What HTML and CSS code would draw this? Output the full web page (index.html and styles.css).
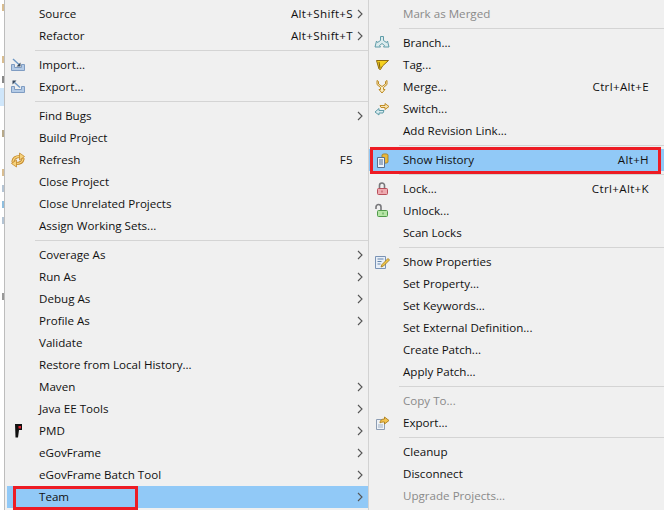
FILE: index.html
```html
<!DOCTYPE html>
<html lang="en">
<head>
<meta charset="utf-8">
<title>Team menu</title>
<link rel="stylesheet" href="styles.css">
</head>
<body>
<svg class="defs" width="0" height="0">
  <defs>
    <symbol id="chev" viewBox="0 0 6 10"><path d="M1 1l4 4-4 4" fill="none" stroke="#555" stroke-width="1.1"/></symbol>
  </defs>
</svg>
<div class="screen">
  <div class="backdrop">
    <span class="frag frag-a"></span>
    <span class="frag frag-b"></span>
    <span class="frag frag-c"></span>
    <span class="frag frag-d"></span>
    <span class="frag frag-e"></span>
    <span class="frag frag-f"></span>
    <span class="frag frag-g"></span>
    <span class="frag frag-h"></span>
    <span class="frag frag-i"></span>
    <span class="frag frag-j"></span>
  </div>
  <div class="menu menu-main">
    <div class="item"><span class="icon"></span><span class="label">Source</span><span class="key">Alt+Shift+S</span><span class="arrow"><svg width="6" height="10"><use href="#chev"/></svg></span></div>
    <div class="item"><span class="icon"></span><span class="label">Refactor</span><span class="key">Alt+Shift+T</span><span class="arrow"><svg width="6" height="10"><use href="#chev"/></svg></span></div>
    <div class="sep"></div>
    <div class="item"><span class="icon"><svg width="16" height="16" viewBox="0 0 16 16"><path d="M1.5 7.5h3v3h7v-3h3v6h-13z" fill="#b4cbe6" stroke="#7f9cc2"/><path d="M3 2l6.5 6" stroke="#6d97c4" stroke-width="1.4"/><path d="M10.5 5.5v4h-4z" fill="#33475f"/></svg></span><span class="label">Import...</span></div>
    <div class="item"><span class="icon"><svg width="16" height="16" viewBox="0 0 16 16"><path d="M1.5 7.5h3v3h7v-3h3v6h-13z" fill="#b4cbe6" stroke="#7f9cc2"/><path d="M10 8.5L4.5 3.5" stroke="#6d97c4" stroke-width="1.4"/><path d="M2.5 1.5h4l-4 4z" fill="#33475f"/></svg></span><span class="label">Export...</span></div>
    <div class="sep"></div>
    <div class="item"><span class="icon"></span><span class="label">Find Bugs</span><span class="arrow"><svg width="6" height="10"><use href="#chev"/></svg></span></div>
    <div class="item"><span class="icon"></span><span class="label">Build Project</span></div>
    <div class="item"><span class="icon"><svg width="16" height="16" viewBox="0 0 16 16"><g fill="none" stroke-linecap="round"><path d="M3 9.500C3.500 6 6.500 4.500 10 4.500" stroke="#c48a2c" stroke-width="3.200"/><path d="M13 7C12.500 10 9.500 11.500 6 11.500" stroke="#c48a2c" stroke-width="3.200"/><path d="M3 9.500C3.500 6 6.500 4.500 10 4.500" stroke="#f6d27c" stroke-width="1.400"/><path d="M13 7C12.500 10 9.500 11.500 6 11.500" stroke="#f6d27c" stroke-width="1.400"/></g><path d="M9.500 1l5 3.500-5 3.500z" fill="#f6d27c" stroke="#c48a2c" stroke-width=".8"/><path d="M6.500 8l-5 3.500 5 3.500z" fill="#f6d27c" stroke="#c48a2c" stroke-width=".8"/></svg></span><span class="label">Refresh</span><span class="key">F5</span></div>
    <div class="item"><span class="icon"></span><span class="label">Close Project</span></div>
    <div class="item"><span class="icon"></span><span class="label">Close Unrelated Projects</span></div>
    <div class="item"><span class="icon"></span><span class="label">Assign Working Sets...</span></div>
    <div class="sep"></div>
    <div class="item"><span class="icon"></span><span class="label">Coverage As</span><span class="arrow"><svg width="6" height="10"><use href="#chev"/></svg></span></div>
    <div class="item"><span class="icon"></span><span class="label">Run As</span><span class="arrow"><svg width="6" height="10"><use href="#chev"/></svg></span></div>
    <div class="item"><span class="icon"></span><span class="label">Debug As</span><span class="arrow"><svg width="6" height="10"><use href="#chev"/></svg></span></div>
    <div class="item"><span class="icon"></span><span class="label">Profile As</span><span class="arrow"><svg width="6" height="10"><use href="#chev"/></svg></span></div>
    <div class="item"><span class="icon"></span><span class="label">Validate</span></div>
    <div class="item"><span class="icon"></span><span class="label">Restore from Local History...</span></div>
    <div class="item"><span class="icon"></span><span class="label">Maven</span><span class="arrow"><svg width="6" height="10"><use href="#chev"/></svg></span></div>
    <div class="item"><span class="icon"></span><span class="label">Java EE Tools</span><span class="arrow"><svg width="6" height="10"><use href="#chev"/></svg></span></div>
    <div class="item"><span class="icon"><svg width="16" height="16" viewBox="0 0 16 16"><path d="M5 1h7v6H9l-1 7.500H5.500z" fill="#111"/><path d="M8.500 3h2.500v2.500H8.500z" fill="#e3222e"/></svg></span><span class="label">PMD</span><span class="arrow"><svg width="6" height="10"><use href="#chev"/></svg></span></div>
    <div class="item"><span class="icon"></span><span class="label">eGovFrame</span><span class="arrow"><svg width="6" height="10"><use href="#chev"/></svg></span></div>
    <div class="item"><span class="icon"></span><span class="label">eGovFrame Batch Tool</span><span class="arrow"><svg width="6" height="10"><use href="#chev"/></svg></span></div>
    <div class="item active"><span class="icon"></span><span class="label">Team</span><span class="arrow"><svg width="6" height="10"><use href="#chev"/></svg></span></div>
  </div>
  <div class="menu menu-sub">
    <div class="item off"><span class="icon"></span><span class="label">Mark as Merged</span></div>
    <div class="sep"></div>
    <div class="item"><span class="icon"><svg width="16" height="16" viewBox="0 0 16 16"><path d="M6.500 1.500h3v4l3 2 1-1.500 1.500 6h-5.500l1-1.500-2.500-2-2.500 2 1 1.500H1l1.500-6 1 1.500 3-2z" fill="#dcebed" stroke="#5f9ca8"/></svg></span><span class="label">Branch...</span></div>
    <div class="item"><span class="icon"><svg width="16" height="16" viewBox="0 0 16 16"><path d="M2.500 3.500h12l-6 5.500-2 3.500-1.500-.5z" fill="#f6d21f" stroke="#8e6b12"/><path d="M5 5l1 6" stroke="#7a5a10" stroke-width="1"/></svg></span><span class="label">Tag...</span></div>
    <div class="item"><span class="icon"><svg width="16" height="16" viewBox="0 0 16 16"><path d="M3 1.500v4l3.500 3v2H5l3 3.500 3-3.500H9.500v-2L13 5.500v-4l-1.500 1v2.500L8 7.500 4.500 5V2.500z" fill="#fbeec4" stroke="#bd8a22"/></svg></span><span class="label">Merge...</span><span class="key">Ctrl+Alt+E</span></div>
    <div class="item"><span class="icon"><svg width="16" height="16" viewBox="0 0 16 16"><path d="M6 4.500h5V2.500l4 3-4 3v-2H7z" fill="#f8e3ae" stroke="#c08d28"/><path d="M10 9.500H5v-2l-4 3.500 4 3v-2h4z" fill="#d8eaee" stroke="#5f9ca8"/></svg></span><span class="label">Switch...</span></div>
    <div class="item"><span class="icon"></span><span class="label">Add Revision Link...</span></div>
    <div class="sep"></div>
    <div class="item active"><span class="icon"><svg width="16" height="16" viewBox="0 0 16 16"><path d="M8 3c0-1.500 6-1.500 6 0v7c0 1.500-6 1.500-6 0z" fill="#e9b93c" stroke="#a5791a" stroke-width=".8"/><path d="M3.500 5.500h7v10h-7z" fill="#eef4fa" stroke="#59708f"/><path d="M5 8h4M5 10h4M5 12h4" stroke="#4d6a90"/></svg></span><span class="label">Show History</span><span class="key">Alt+H</span></div>
    <div class="sep"></div>
    <div class="item"><span class="icon"><svg width="16" height="16" viewBox="0 0 16 16"><path d="M5.500 7V4.500a2.500 2.500 0 0 1 5 0V7" fill="none" stroke="#77777a" stroke-width="1.600"/><rect x="3.500" y="7.500" width="10" height="6" rx="1" fill="#eeaab0" stroke="#b84f5a"/><path d="M8 9.500v2" stroke="#b84f5a"/></svg></span><span class="label">Lock...</span><span class="key">Ctrl+Alt+K</span></div>
    <div class="item"><span class="icon"><svg width="16" height="16" viewBox="0 0 16 16"><path d="M2 6V4a2.500 2.500 0 0 1 5 0v3.500" fill="none" stroke="#77777a" stroke-width="1.600"/><rect x="3.500" y="7.500" width="10" height="6" rx="1" fill="#b6e5a6" stroke="#4f9a4a"/><path d="M9 9.500v2" stroke="#4f9a4a"/></svg></span><span class="label">Unlock...</span></div>
    <div class="item"><span class="icon"></span><span class="label">Scan Locks</span></div>
    <div class="sep"></div>
    <div class="item"><span class="icon"><svg width="16" height="16" viewBox="0 0 16 16"><path d="M1.500 2.500h10v12h-10z" fill="#e8eff8" stroke="#7a93b5"/><path d="M3.500 5h6M3.500 7.500h4M3.500 10h3" stroke="#6484ab"/><path d="M14 4.500l1.500 1.500-6 6-2.500 1 1-2.500z" fill="#f3c84a" stroke="#9b7518" stroke-width=".8"/></svg></span><span class="label">Show Properties</span></div>
    <div class="item"><span class="icon"></span><span class="label">Set Property...</span></div>
    <div class="item"><span class="icon"></span><span class="label">Set Keywords...</span></div>
    <div class="item"><span class="icon"></span><span class="label">Set External Definition...</span></div>
    <div class="item"><span class="icon"></span><span class="label">Create Patch...</span></div>
    <div class="item"><span class="icon"></span><span class="label">Apply Patch...</span></div>
    <div class="sep"></div>
    <div class="item off"><span class="icon"></span><span class="label">Copy To...</span></div>
    <div class="item"><span class="icon"><svg width="16" height="16" viewBox="0 0 16 16"><path d="M2.500 4.500h8v10h-8z" fill="#eef2f7" stroke="#8c9db3"/><path d="M4 10h5M4 12h5" stroke="#9fb0c4"/><path d="M6 8c0-3 2-4 4.500-4V2l4.500 3.500L10.500 9V7C8.500 7 7 7 6 8z" fill="#f3c350" stroke="#ad7f1c" stroke-width=".9"/></svg></span><span class="label">Export...</span></div>
    <div class="sep"></div>
    <div class="item"><span class="icon"></span><span class="label">Cleanup</span></div>
    <div class="item"><span class="icon"></span><span class="label">Disconnect</span></div>
    <div class="item off"><span class="icon"></span><span class="label">Upgrade Projects...</span></div>
  </div>
  <div class="mark mark-team"></div>
  <div class="mark mark-history"></div>
</div>
</body>
</html>
```
FILE: styles.css
```css
* { box-sizing: border-box; }
html, body { margin: 0; padding: 0; }
body { width: 664px; height: 510px; overflow: hidden; background: #f0f0f0; font-family: "Open Sans", "Noto Sans", sans-serif; font-size: 11.6px; color: #111; }
.defs { position: absolute; }
.screen { position: relative; display: flex; width: 664px; height: 510px; overflow: hidden; }

.backdrop { position: relative; flex: none; width: 5px; background: #fff; border-right: 1px solid #bdbdbd; }
.frag { position: absolute; right: 0; width: 2px; height: 7px; background: #d9bd90; }
.frag-a { top: 4px; }
.frag-b { top: 56px; }
.frag-c { top: 76px; background: #888; }
.frag-d { top: 88px; width: 4px; height: 18px; background: #cfe6fa; }
.frag-e { top: 130px; background: #b7a98a; }
.frag-f { top: 169px; }
.frag-g { top: 185px; background: #b4c4d4; }
.frag-h { top: 201px; background: #8fbede; }
.frag-i { top: 217px; background: #b4c4d4; }
.frag-j { top: 293px; background: #999; }

.menu { flex: none; padding-top: 3px; background: #f0f0f0; }
.menu-main { width: 363px; padding-left: 2px; }
.menu-sub { width: 296px; border-left: 1px solid #d2d2d2; }

.item { display: grid; grid-template-columns: 32px 1fr auto 15px; align-items: center; height: 22px; }
.menu-sub .item { grid-template-columns: 34px 1fr auto 15px; }
.icon { grid-column: 1; display: flex; align-items: center; height: 16px; padding-left: 3px; }
.menu-sub .icon { padding-left: 5px; }
.label { grid-column: 2; padding-bottom: 2px; }
.key { grid-column: 3; padding-bottom: 2px; letter-spacing: .33px; }
.arrow { grid-column: 4; display: flex; align-items: center; padding-left: 4px; }
.arrow svg { display: block; }

.active { background: #91c9f7; }
.off { color: #8a8a8a; }
.sep { height: 1px; margin: 3px 0 3px 28px; background: #d4d4d4; }
.menu-sub .sep { margin-left: 30px; }

.mark { position: absolute; border: 3px solid #ed1c24; }
.mark-team { left: 13px; top: 486px; width: 125px; height: 24px; }
.mark-history { left: 370px; top: 147px; width: 291px; height: 27px; }
```
